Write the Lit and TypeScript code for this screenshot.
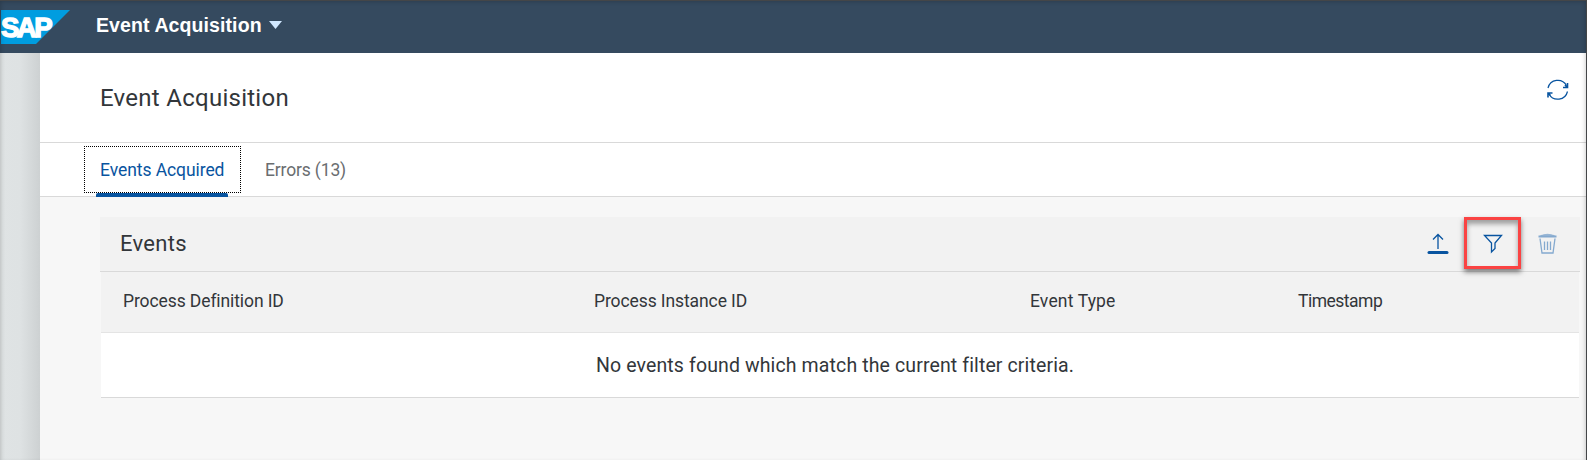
import { LitElement, html, css } from "lit";
import { customElement } from "lit/decorators.js";

@customElement("app-root")
export class AppRoot extends LitElement {
  static styles = css`
    :host { display: block; font-family: Roboto, "Noto Sans", sans-serif; color: #32363a; }
    * { box-sizing: border-box; }
    .frame { position: relative; width: 1587px; height: 460px; overflow: hidden; border-top: 1px solid #444648; border-right: 1px solid #444648; display: flex; flex-direction: column; }
    .frame::after { content: ""; position: absolute; inset: 0 0 -3px; box-shadow: inset 0 0 5px rgba(0,0,0,.25); pointer-events: none; }
    .shell { height: 52px; flex: none; background: #354a5f; display: flex; align-items: center; }
    .logo { width: 69px; height: 34px; margin-left: 1px; }
    .logo text { font: 700 27px "Liberation Sans", sans-serif; letter-spacing: -2.5px; fill: #fff; stroke: #fff; stroke-width: 1.4px; }
    .app { margin-left: 26px; margin-top: -4px; color: #fff; font-family: "Liberation Sans", Arial, sans-serif; font-weight: 700; font-size: 19.5px; letter-spacing: .1px; width: 165px; white-space: nowrap; }
    .caret { width: 13px; height: 8px; margin: -4px 0 0 8px; background: #d1e8ff; clip-path: polygon(0 0, 100% 0, 50% 100%); }
    .body { flex: 1; display: flex; min-height: 0; }
    .side { width: 40px; background: linear-gradient(90deg, #dfe3e4, #dee2e3 50%, #cdd1d2); }
    .page { flex: 1; background: #f7f7f7; display: flex; flex-direction: column; }
    .title { height: 90px; background: #fff; border-bottom: 1px solid #d9d9d9; display: flex; justify-content: space-between; padding: 0 16px 0 60px; }
    h1 { font-weight: 400; font-size: 24px; line-height: 30px; margin: 30px 0 0; letter-spacing: .27px; }
    .refresh { width: 24px; height: 24px; margin-top: 25px; }
    .tabs { height: 54px; background: #fff; border-bottom: 1px solid #d9d9d9; display: flex; padding: 3px 0 0 44px; font-size: 17.5px; letter-spacing: -.07px; }
    .tab { height: 47px; line-height: 48px; white-space: nowrap; }
    .active { width: 157px; padding-left: 15px; border: 1px dotted #000; color: #0854a0; line-height: 46px; position: relative; }
    .active::after { content: ""; position: absolute; left: 11px; top: 46px; width: 132px; height: 4px; background: #0854a0; border-radius: 2px 2px 0 0; }
    .other { color: #6a6d70; padding-left: 24px; letter-spacing: -.15px; }
    .panel { margin: 20px 6px 0 60px; }
    .toolbar { height: 55px; background: #f2f2f2; border-bottom: 1px solid #d9d9d9; display: flex; align-items: center; padding: 0 20px; }
    h2 { font-weight: 400; font-size: 22px; letter-spacing: .3px; margin: 0 auto 2px 0; }
    .ic { width: 24px; height: 24px; display: block; }
    .mark { width: 57px; height: 52px; margin: -3px 15px 0 14px; border: 3px solid #fa4343; box-shadow: 0 3px 5px rgba(0,0,0,.5), inset 0 4px 5px rgba(0,0,0,.35); display: grid; place-items: center; z-index: 1; }
    .mark .ic { margin-top: 3px; }
    .table { margin: 0 1px; font-size: 17.5px; }
    .head { height: 61px; background: #f2f2f2; border-bottom: 1px solid #e4e4e4; display: grid; grid-template-columns: 471px 436px 268px 1fr; padding-left: 22px; line-height: 59px; letter-spacing: -.1px; }
    .type { letter-spacing: .15px; }
    .time { letter-spacing: -.5px; }
    .empty { height: 65px; background: #fff; border-bottom: 1px solid #d9d9d9; text-align: center; font-size: 19.5px; letter-spacing: .12px; line-height: 65px; padding-right: 10px; }
  `;

  render() {
    return html`<div class="frame">
      <header class="shell">
        <svg class="logo" viewBox="0 0 69 34"><path d="M0 0H69L35 34H0Z" fill="#009de0"/><text x="0" y="27" textLength="49" lengthAdjust="spacingAndGlyphs">SAP</text></svg>
        <span class="app">Event Acquisition</span><span class="caret"></span>
      </header>
      <div class="body"><div class="side"></div>
        <main class="page">
          <div class="title"><h1>Event Acquisition</h1>
            <svg class="refresh" viewBox="0 0 24 24" fill="none" stroke="#0854a0" stroke-width="1.2"><path d="M2 10A10 10 0 0 1 20.500 7.500M21.500 13.500A10 10 0 0 1 3 16"/><path d="M21.500 5V9.500H17M19 7L21.500 9.500M2 19.500V15H6.500M4.500 17.500L2 15" stroke-width="1.600"/></svg></div>
          <nav class="tabs"><div class="tab active">Events Acquired</div><div class="tab other">Errors (13)</div></nav>
          <section class="panel">
            <div class="toolbar"><h2>Events</h2>
              <svg class="ic" viewBox="0.500 0 24 24" fill="none" stroke="#0854a0"><path d="M12.500 17V2.500M7.500 7.500L12.500 2.500L17.500 7.500" stroke-width="1.300"/><path d="M3.500 20.500H21.500" stroke-width="3" stroke-linecap="round"/></svg>
              <div class="mark"><svg class="ic" viewBox="0 0 24 24" fill="none" stroke="#0854a0" stroke-width="1.300"><path d="M3.500 3.500H20.500L14 11V16.500L10.500 20V11Z"/></svg></div>
              <svg class="ic" viewBox="0.500 0 24 24" fill="none" stroke="#84a9cf" stroke-width="1.300"><path d="M4.500 6.500L6.500 21H17.500L19.500 6.500M9 9.500V18M12 9.500V18M15 9.500V18"/><path d="M3 4.500H21" stroke-width="2"/><path d="M5 3.500Q12 .8 19 3.500Z" fill="#84a9cf" stroke-width=".5"/></svg>
            </div>
            <div class="table"><div class="head"><span>Process Definition ID</span><span>Process Instance ID</span><span class="type">Event Type</span><span class="time">Timestamp</span></div>
            <div class="empty">No events found which match the current filter criteria.</div></div>
          </section>
        </main></div>
    </div>`;
  }
}
